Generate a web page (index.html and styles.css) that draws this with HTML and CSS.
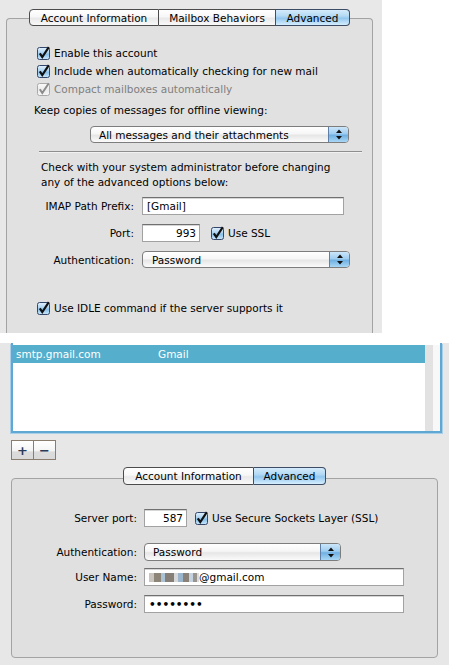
FILE: index.html
```html
<!DOCTYPE html>
<html>
<head>
<meta charset="utf-8">
<link rel="stylesheet" href="styles.css">
</head>
<body>
<svg class="defs" width="0" height="0">
  <defs>
    <linearGradient id="cbg" x1="0" y1="0" x2="0" y2="1">
      <stop offset="0" stop-color="#e3f1fc"/>
      <stop offset="0.45" stop-color="#a9d2f1"/>
      <stop offset="0.55" stop-color="#86bfe9"/>
      <stop offset="1" stop-color="#cbe8fb"/>
    </linearGradient>
    <linearGradient id="cbd" x1="0" y1="0" x2="0" y2="1">
      <stop offset="0" stop-color="#fafafa"/>
      <stop offset="0.5" stop-color="#ececec"/>
      <stop offset="1" stop-color="#f6f6f6"/>
    </linearGradient>
  </defs>
</svg>

<div class="top">
  <div class="tabbox tabbox-top">
    <div class="tabs tabs-top">
      <span class="tab tab-ai">Account Information</span>
      <span class="tab tab-mb">Mailbox Behaviors</span>
      <span class="tab tab-adv sel">Advanced</span>
    </div>

    <div class="checks">
      <div class="cb-row">
        <svg class="cb" viewBox="0 0 13 13"><rect x="0.5" y="0.5" width="12" height="12" rx="2" fill="url(#cbg)" stroke="#34476a"/><path d="M2.8 6.3 L5.3 10 L11.8 0.2" fill="none" stroke="#111" stroke-width="2.2"/></svg>
        <span>Enable this account</span>
      </div>
      <div class="cb-row">
        <svg class="cb" viewBox="0 0 13 13"><rect x="0.5" y="0.5" width="12" height="12" rx="2" fill="url(#cbg)" stroke="#34476a"/><path d="M2.8 6.3 L5.3 10 L11.8 0.2" fill="none" stroke="#111" stroke-width="2.2"/></svg>
        <span>Include when automatically checking for new mail</span>
      </div>
      <div class="cb-row disabled">
        <svg class="cb" viewBox="0 0 13 13"><rect x="0.5" y="0.5" width="12" height="12" rx="2" fill="url(#cbd)" stroke="#a9a9a9"/><path d="M2.8 6.3 L5.3 10 L11.8 0.2" fill="none" stroke="#8c8c8c" stroke-width="2"/></svg>
        <span>Compact mailboxes automatically</span>
      </div>
    </div>

    <div class="keep">Keep copies of messages for offline viewing:</div>
    <div class="popup popup-keep">
      <span class="popup-text">All messages and their attachments</span>
      <span class="stepper"><svg width="8" height="11" viewBox="0 0 8 11"><path d="M4 0.5 L7 4 L1 4 Z M1 7 L7 7 L4 10.5 Z" fill="#111"/></svg></span>
    </div>

    <div class="sep"></div>

    <p class="note">Check with your system administrator before changing<br>any of the advanced options below:</p>

    <div class="form form-top">
      <div class="frow">
        <span class="lbl">IMAP Path Prefix:</span>
        <span class="field field-imap">[Gmail]</span>
      </div>
      <div class="frow frow-gap">
        <span class="lbl">Port:</span>
        <span class="field field-num field-port-top">993</span>
        <svg class="cb cb-ssl-top" viewBox="0 0 13 13"><rect x="0.5" y="0.5" width="12" height="12" rx="2" fill="url(#cbg)" stroke="#34476a"/><path d="M2.8 6.3 L5.3 10 L11.8 0.2" fill="none" stroke="#111" stroke-width="2.2"/></svg>
        <span class="cb-label">Use SSL</span>
      </div>
      <div class="frow frow-gap">
        <span class="lbl">Authentication:</span>
        <span class="popup popup-auth-top">
          <span class="popup-text">Password</span>
          <span class="stepper"><svg width="8" height="11" viewBox="0 0 8 11"><path d="M4 0.5 L7 4 L1 4 Z M1 7 L7 7 L4 10.5 Z" fill="#111"/></svg></span>
        </span>
      </div>
    </div>

    <div class="cb-row idle">
      <svg class="cb" viewBox="0 0 13 13"><rect x="0.5" y="0.5" width="12" height="12" rx="2" fill="url(#cbg)" stroke="#34476a"/><path d="M2.8 6.3 L5.3 10 L11.8 0.2" fill="none" stroke="#111" stroke-width="2.2"/></svg>
      <span>Use IDLE command if the server supports it</span>
    </div>
  </div>
</div>

<div class="gap"></div>

<div class="bottom">
  <div class="list">
    <div class="list-main">
      <div class="list-row sel-row">
        <span class="col-server">smtp.gmail.com</span>
        <span class="col-name">Gmail</span>
      </div>
    </div>
    <div class="scroll"></div>
  </div>

  <div class="pm">
    <span class="pm-btn">+</span>
    <span class="pm-btn">−</span>
  </div>

  <div class="tabbox tabbox-bottom">
    <div class="tabs tabs-bottom">
      <span class="tab tab-ai2">Account Information</span>
      <span class="tab tab-adv2 sel">Advanced</span>
    </div>

    <div class="form form-bottom">
      <div class="frow">
        <span class="lbl">Server port:</span>
        <span class="field field-num field-port-bot">587</span>
        <svg class="cb cb-ssl-bot" viewBox="0 0 13 13"><rect x="0.5" y="0.5" width="12" height="12" rx="2" fill="url(#cbg)" stroke="#34476a"/><path d="M2.8 6.3 L5.3 10 L11.8 0.2" fill="none" stroke="#111" stroke-width="2.2"/></svg>
        <span class="cb-label">Use Secure Sockets Layer (SSL)</span>
      </div>
      <div class="frow frow-auth">
        <span class="lbl">Authentication:</span>
        <span class="popup popup-auth-bot">
          <span class="popup-text">Password</span>
          <span class="stepper"><svg width="8" height="11" viewBox="0 0 8 11"><path d="M4 0.5 L7 4 L1 4 Z M1 7 L7 7 L4 10.5 Z" fill="#111"/></svg></span>
        </span>
      </div>
      <div class="frow frow-user">
        <span class="lbl">User Name:</span>
        <span class="field field-wide"><span class="blur"></span>@gmail.com</span>
      </div>
      <div class="frow frow-pw">
        <span class="lbl">Password:</span>
        <span class="field field-wide dots">••••••••</span>
      </div>
    </div>
  </div>
</div>
</body>
</html>
```

FILE: styles.css
```css
* {
  box-sizing: border-box;
  margin: 0;
  padding: 0;
}

html, body {
  width: 449px;
  height: 665px;
  overflow: hidden;
  background: #ffffff;
}

body {
  font-family: "DejaVu Sans", "Liberation Sans", sans-serif;
  font-size: 10.5px;
  color: #000;
}

.defs {
  display: block;
  width: 0;
  height: 0;
}

/* ---------- top window ---------- */
.top {
  width: 382px;
  height: 333px;
  background: #e8e8e8;
  padding-top: 18px;
  overflow: hidden;
}

.tabbox {
  border: 1px solid #a3a3a3;
  background: #e1e1e1;
}

.tabbox-top {
  margin-left: 6px;
  width: 367px;
  height: 330px;
  border-bottom: none;
  border-radius: 4px 4px 0 0;
}

.tabs {
  display: flex;
  justify-content: center;
}

.tabs-top {
  margin-top: -10px;
  height: 17px;
}

.tab {
  display: flex;
  align-items: center;
  justify-content: center;
  height: 100%;
  border: 1px solid #4c4c4c;
  border-left: none;
  background: linear-gradient(#ffffff 0%, #f7f7f7 45%, #e9e9e9 55%, #f9f9f9 100%);
  white-space: nowrap;
}

.tab:first-child {
  border-left: 1px solid #4c4c4c;
  border-radius: 4px 0 0 4px;
}

.tab:last-child {
  border-radius: 0 4px 4px 0;
}

.tab.sel {
  background: linear-gradient(#d4ebfb 0%, #b3d9f4 40%, #92c6ee 55%, #bfe1f9 85%, #d6eefd 100%);
  border-color: #3d4d66;
}

.tab-ai { width: 130px; }
.tab-mb { width: 117px; }
.tab-adv { width: 74px; }

.checks {
  margin-top: 18px;
  padding-left: 30px;
}

.cb-row {
  display: flex;
  align-items: center;
  gap: 4px;
  height: 18px;
}

.cb {
  width: 13px;
  height: 13px;
  flex: none;
  overflow: visible;
}

.disabled {
  color: #7f7f7f;
}

.keep {
  margin-top: 3px;
  height: 18px;
  line-height: 18px;
  padding-left: 27px;
}

.popup {
  display: flex;
  align-items: center;
  height: 17px;
  border: 1px solid #7d7d7d;
  border-radius: 4px;
  background: linear-gradient(#ffffff 0%, #f6f6f6 45%, #e6e6e6 55%, #fbfbfb 100%);
  overflow: hidden;
}

.popup-text {
  flex: 1;
  padding-left: 8px;
  white-space: nowrap;
}

.stepper {
  width: 20px;
  height: 100%;
  display: flex;
  align-items: center;
  justify-content: center;
  border-left: 1px solid #5d7fa8;
  background: linear-gradient(#cbe6fa 0%, #9fcdf0 45%, #6fb0e2 55%, #a9d7f6 100%);
}

.popup-keep {
  margin: 7px 0 0 83px;
  width: 259px;
}

.sep {
  margin: 8px 0 0 32px;
  width: 323px;
  height: 1px;
  background: #8e8e8e;
  box-shadow: 0 1px 0 #f1f1f1;
}

.note {
  margin-top: 8px;
  padding-left: 34px;
  line-height: 15px;
}

.form-top {
  margin-top: 7px;
}

.frow {
  display: flex;
  align-items: center;
}

.form-top .lbl {
  width: 127px;
  margin-right: 8px;
  text-align: right;
}

.form-top .frow-gap {
  margin-top: 9px;
}

.field {
  display: flex;
  align-items: center;
  height: 18px;
  background: #fff;
  border: 1px solid #a2a2a2;
  border-top-color: #707070;
  box-shadow: inset 0 1px 0 #d6d6d6;
  padding-left: 4px;
  white-space: nowrap;
}

.field-num {
  justify-content: flex-end;
  padding-right: 3px;
}

.field-imap { width: 202px; }
.field-port-top { width: 58px; }
.cb-ssl-top { margin-left: 11px; }

.cb-label {
  margin-left: 4px;
  white-space: nowrap;
}

.popup-auth-top {
  width: 208px;
}

.popup-auth-top .popup-text {
  padding-left: 9px;
}

.idle {
  margin-top: 31px;
  padding-left: 30px;
}

/* ---------- gap ---------- */
.gap {
  height: 10px;
}

/* ---------- bottom window ---------- */
.bottom {
  height: 322px;
  background: #e7e7e7;
  overflow: hidden;
}

.list {
  display: flex;
  margin-left: 11px;
  width: 431px;
  height: 90px;
  border: 2px solid #5ea8d3;
  border-top: none;
  box-shadow: -1px 1px 0 #a8cfe7, 1px 1px 0 #a8cfe7;
  background: #fff;
  padding-top: 2px;
}

.list-main {
  flex: 1;
}

.list-row {
  display: flex;
  align-items: center;
  height: 18px;
  padding-left: 3px;
}

.sel-row {
  background: #55aecb;
  color: #fff;
}

.col-server {
  width: 142px;
}

.scroll {
  width: 15px;
  background: linear-gradient(to right, #e2e2e2 0, #e2e2e2 8px, #f8f8f8 8px);
}

.pm {
  display: flex;
  margin: 7px 0 0 11px;
}

.pm-btn {
  width: 23px;
  height: 20px;
  display: flex;
  align-items: center;
  justify-content: center;
  border: 1px solid #8b7d6e;
  background: linear-gradient(#ffffff 0%, #f4f4f4 55%, #dcdcdc 60%, #d9d9d9 100%);
  color: #2a3b58;
  font-weight: bold;
  font-size: 13px;
  line-height: 1;
}

.pm-btn + .pm-btn {
  margin-left: -1px;
}

.tabbox-bottom {
  margin: 18px 0 0 11px;
  width: 427px;
  height: 180px;
  border-radius: 4px;
  background: #e0e0e0;
}

.tabs-bottom {
  margin-top: -12px;
  height: 18px;
}

.tab-ai2 { width: 131px; }
.tab-adv2 { width: 72px; }

.form-bottom {
  margin-top: 24px;
}

.form-bottom .lbl {
  width: 125px;
  margin-right: 7px;
  text-align: right;
}

.field-port-bot { width: 43px; }
.cb-ssl-bot { margin-left: 8px; }

.frow-auth { margin-top: 16px; }
.frow-user { margin-top: 7px; }
.frow-pw { margin-top: 9px; }

.popup-auth-bot {
  width: 197px;
  height: 18px;
}

.field-wide {
  width: 260px;
}

.blur {
  display: inline-block;
  width: 50px;
  height: 9px;
  background: linear-gradient(to right,
    #c9c4c0 0, #c9c4c0 5px,
    #8e8579 5px, #8e8579 12px,
    #a9c2d6 12px, #a9c2d6 16px,
    #867f78 16px, #867f78 25px,
    #d8d8d8 25px, #d8d8d8 29px,
    #9bb6cc 29px, #9bb6cc 34px,
    #8a8279 34px, #8a8279 40px,
    #c4d3df 40px, #c4d3df 44px,
    #9a948e 44px, #9a948e 48px,
    #dcdcdc 48px, #dcdcdc 50px);
}

.dots {
  font-weight: bold;
  letter-spacing: 0;
}
```
